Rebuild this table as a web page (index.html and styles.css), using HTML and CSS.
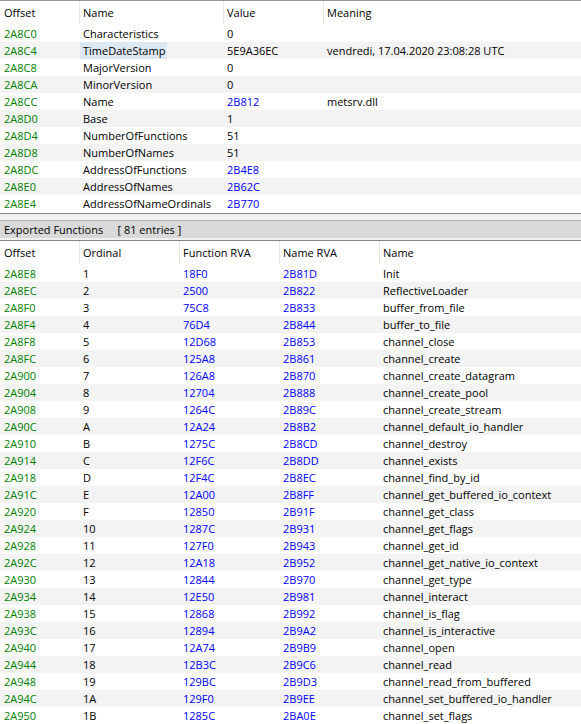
FILE: index.html
```html
<!DOCTYPE html>
<html>
<head>
<meta charset="utf-8">
<link rel="stylesheet" href="styles.css">
</head>
<body>
<div class="pane top">
  <div class="grid top-grid head">
    <div class="h first">Offset</div>
    <div class="h">Name</div>
    <div class="h">Value</div>
    <div class="h">Meaning</div>
  </div>
  <div class="grid top-grid row"><div class="off">2A8C0</div><div>Characteristics</div><div>0</div><div></div></div>
  <div class="grid top-grid row"><div class="off">2A8C4</div><div class="selcell"><span class="sel">TimeDateStamp</span></div><div>5E9A36EC</div><div>vendredi, 17.04.2020 23:08:28 UTC</div></div>
  <div class="grid top-grid row"><div class="off">2A8C8</div><div>MajorVersion</div><div>0</div><div></div></div>
  <div class="grid top-grid row"><div class="off">2A8CA</div><div>MinorVersion</div><div>0</div><div></div></div>
  <div class="grid top-grid row"><div class="off">2A8CC</div><div>Name</div><div class="rva">2B812</div><div>metsrv.dll</div></div>
  <div class="grid top-grid row"><div class="off">2A8D0</div><div>Base</div><div>1</div><div></div></div>
  <div class="grid top-grid row"><div class="off">2A8D4</div><div>NumberOfFunctions</div><div>51</div><div></div></div>
  <div class="grid top-grid row"><div class="off">2A8D8</div><div>NumberOfNames</div><div>51</div><div></div></div>
  <div class="grid top-grid row"><div class="off">2A8DC</div><div>AddressOfFunctions</div><div class="rva">2B4E8</div><div></div></div>
  <div class="grid top-grid row"><div class="off">2A8E0</div><div>AddressOfNames</div><div class="rva">2B62C</div><div></div></div>
  <div class="grid top-grid row"><div class="off">2A8E4</div><div>AddressOfNameOrdinals</div><div class="rva">2B770</div><div></div></div>
</div>
<div class="splitter">
  <div class="gap"></div>
  <div class="title">Exported Functions&nbsp;&nbsp;&nbsp;&nbsp;&nbsp;[ 81 entries ]</div>
</div>
<div class="pane bottom">
  <div class="grid bot-grid head">
    <div class="h first">Offset</div>
    <div class="h">Ordinal</div>
    <div class="h">Function RVA</div>
    <div class="h">Name RVA</div>
    <div class="h">Name</div>
  </div>
  <div class="grid bot-grid row"><div class="off">2A8E8</div><div>1</div><div class="rva">18F0</div><div class="rva">2B81D</div><div>Init</div></div>
  <div class="grid bot-grid row"><div class="off">2A8EC</div><div>2</div><div class="rva">2500</div><div class="rva">2B822</div><div>ReflectiveLoader</div></div>
  <div class="grid bot-grid row"><div class="off">2A8F0</div><div>3</div><div class="rva">75C8</div><div class="rva">2B833</div><div>buffer_from_file</div></div>
  <div class="grid bot-grid row"><div class="off">2A8F4</div><div>4</div><div class="rva">76D4</div><div class="rva">2B844</div><div>buffer_to_file</div></div>
  <div class="grid bot-grid row"><div class="off">2A8F8</div><div>5</div><div class="rva">12D68</div><div class="rva">2B853</div><div>channel_close</div></div>
  <div class="grid bot-grid row"><div class="off">2A8FC</div><div>6</div><div class="rva">125A8</div><div class="rva">2B861</div><div>channel_create</div></div>
  <div class="grid bot-grid row"><div class="off">2A900</div><div>7</div><div class="rva">126A8</div><div class="rva">2B870</div><div>channel_create_datagram</div></div>
  <div class="grid bot-grid row"><div class="off">2A904</div><div>8</div><div class="rva">12704</div><div class="rva">2B888</div><div>channel_create_pool</div></div>
  <div class="grid bot-grid row"><div class="off">2A908</div><div>9</div><div class="rva">1264C</div><div class="rva">2B89C</div><div>channel_create_stream</div></div>
  <div class="grid bot-grid row"><div class="off">2A90C</div><div>A</div><div class="rva">12A24</div><div class="rva">2B8B2</div><div>channel_default_io_handler</div></div>
  <div class="grid bot-grid row"><div class="off">2A910</div><div>B</div><div class="rva">1275C</div><div class="rva">2B8CD</div><div>channel_destroy</div></div>
  <div class="grid bot-grid row"><div class="off">2A914</div><div>C</div><div class="rva">12F6C</div><div class="rva">2B8DD</div><div>channel_exists</div></div>
  <div class="grid bot-grid row"><div class="off">2A918</div><div>D</div><div class="rva">12F4C</div><div class="rva">2B8EC</div><div>channel_find_by_id</div></div>
  <div class="grid bot-grid row"><div class="off">2A91C</div><div>E</div><div class="rva">12A00</div><div class="rva">2B8FF</div><div>channel_get_buffered_io_context</div></div>
  <div class="grid bot-grid row"><div class="off">2A920</div><div>F</div><div class="rva">12850</div><div class="rva">2B91F</div><div>channel_get_class</div></div>
  <div class="grid bot-grid row"><div class="off">2A924</div><div>10</div><div class="rva">1287C</div><div class="rva">2B931</div><div>channel_get_flags</div></div>
  <div class="grid bot-grid row"><div class="off">2A928</div><div>11</div><div class="rva">127F0</div><div class="rva">2B943</div><div>channel_get_id</div></div>
  <div class="grid bot-grid row"><div class="off">2A92C</div><div>12</div><div class="rva">12A18</div><div class="rva">2B952</div><div>channel_get_native_io_context</div></div>
  <div class="grid bot-grid row"><div class="off">2A930</div><div>13</div><div class="rva">12844</div><div class="rva">2B970</div><div>channel_get_type</div></div>
  <div class="grid bot-grid row"><div class="off">2A934</div><div>14</div><div class="rva">12E50</div><div class="rva">2B981</div><div>channel_interact</div></div>
  <div class="grid bot-grid row"><div class="off">2A938</div><div>15</div><div class="rva">12868</div><div class="rva">2B992</div><div>channel_is_flag</div></div>
  <div class="grid bot-grid row"><div class="off">2A93C</div><div>16</div><div class="rva">12894</div><div class="rva">2B9A2</div><div>channel_is_interactive</div></div>
  <div class="grid bot-grid row"><div class="off">2A940</div><div>17</div><div class="rva">12A74</div><div class="rva">2B9B9</div><div>channel_open</div></div>
  <div class="grid bot-grid row"><div class="off">2A944</div><div>18</div><div class="rva">12B3C</div><div class="rva">2B9C6</div><div>channel_read</div></div>
  <div class="grid bot-grid row"><div class="off">2A948</div><div>19</div><div class="rva">129BC</div><div class="rva">2B9D3</div><div>channel_read_from_buffered</div></div>
  <div class="grid bot-grid row"><div class="off">2A94C</div><div>1A</div><div class="rva">129F0</div><div class="rva">2B9EE</div><div>channel_set_buffered_io_handler</div></div>
  <div class="grid bot-grid row"><div class="off">2A950</div><div>1B</div><div class="rva">1285C</div><div class="rva">2BA0E</div><div>channel_set_flags</div></div>
</div>
</body>
</html>
```
FILE: styles.css
```css
html, body {
  margin: 0;
  padding: 0;
  background: #ffffff;
}
body {
  width: 581px;
  height: 724px;
  overflow: hidden;
  font-family: "Open Sans", "Noto Sans", sans-serif;
  font-size: 11px;
  color: #000000;
}
.pane.top {
  border-top: 1px solid #9a9a9a;
  padding-bottom: 1px;
}
.grid {
  display: grid;
}
.top-grid {
  grid-template-columns: 79px 144px 100px 1fr;
}
.bot-grid {
  grid-template-columns: 79px 100px 100px 100px 1fr;
}
.head {
  height: 24px;
}
.h {
  line-height: 23px;
  height: 23px;
  border-left: 1px solid #e5e5e5;
  padding-left: 3px;
  white-space: nowrap;
}
.h.first {
  border-left: none;
  padding-left: 4px;
}
.row {
  height: 17px;
  line-height: 17px;
  white-space: nowrap;
}
.row > div {
  padding-left: 4px;
  overflow: hidden;
}
.pane .row:nth-child(odd) {
  background: #f3f3f3;
}
.off {
  color: #008000;
}
.rva {
  color: #0000ff;
}
.row > .selcell {
  padding-left: 1px;
}
.sel {
  display: inline-block;
  background: #dde8f3;
  padding: 0 2px 0 3px;
}
.splitter {
  border-top: 1px solid #868686;
  background: #f0f0f0;
}
.gap {
  height: 6px;
}
.title {
  border-top: 1px solid #b4b4b4;
  background: #d9d9d9;
  height: 17px;
  line-height: 17px;
  padding-left: 4px;
  border-bottom: 2px solid #f0f0f0;
  box-shadow: 0 1px 0 #868686;
  margin-bottom: 1px;
  white-space: nowrap;
}
```
